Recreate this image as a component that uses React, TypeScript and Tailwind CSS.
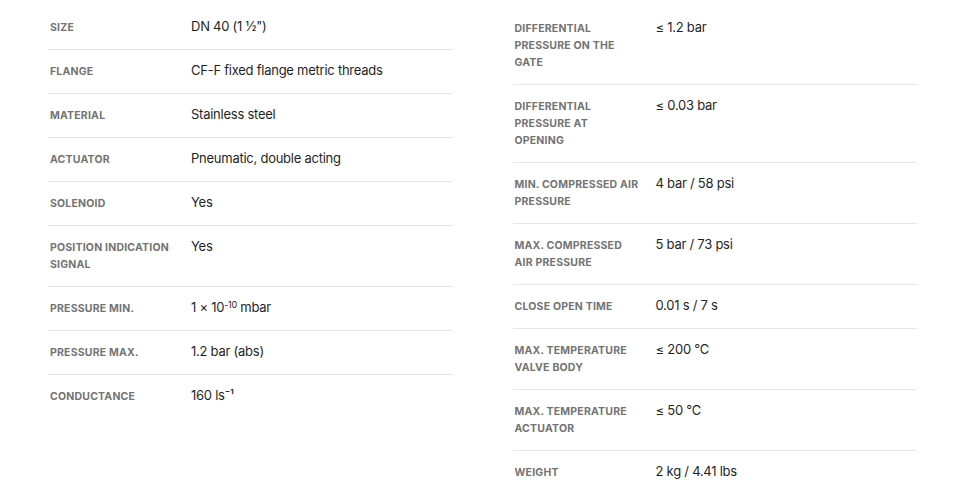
import React from "react";

type Spec = { label: string[]; value: React.ReactNode };

const left: Spec[] = [
  { label: ["Size"], value: "DN 40 (1 ½\")" },
  { label: ["Flange"], value: "CF-F fixed flange metric threads" },
  { label: ["Material"], value: "Stainless steel" },
  { label: ["Actuator"], value: "Pneumatic, double acting" },
  { label: ["Solenoid"], value: "Yes" },
  { label: ["Position indication", "signal"], value: "Yes" },
  {
    label: ["Pressure min."],
    value: (
      <>
        1 × 10<sup className="text-[9px]">-10</sup> mbar
      </>
    ),
  },
  { label: ["Pressure max."], value: "1.2 bar (abs)" },
  { label: ["Conductance"], value: "160 ls⁻¹" },
];

const right: Spec[] = [
  { label: ["Differential", "pressure on the", "gate"], value: "≤ 1.2 bar" },
  { label: ["Differential", "pressure at", "opening"], value: "≤ 0.03 bar" },
  { label: ["Min. compressed air", "pressure"], value: "4 bar / 58 psi" },
  { label: ["Max. compressed", "air pressure"], value: "5 bar / 73 psi" },
  { label: ["Close open time"], value: "0.01 s / 7 s" },
  { label: ["Max. temperature", "valve body"], value: "≤ 200 °C" },
  { label: ["Max. temperature", "actuator"], value: "≤ 50 °C" },
  { label: ["Weight"], value: "2 kg / 4.41 lbs" },
];

const SpecTable = ({ rows, className = "" }: { rows: Spec[]; className?: string }) => (
  <div className={`flex flex-col ${className}`}>
    {rows.map((row, i) => (
      <div
        key={row.label.join(" ")}
        className={`flex py-[13px] ${i < rows.length - 1 ? "border-b border-[#e6e6e6]" : ""}`}
      >
        <div className="w-[143px] shrink-0 pl-[2px] text-[10.5px] leading-[17px] font-bold uppercase tracking-[0.2px] text-[#737373]">
          {row.label.map((line) => (
            <span key={line} className="block whitespace-nowrap">
              {line}
            </span>
          ))}
        </div>
        <div className="-mt-[2px] text-[13px] leading-[18px] tracking-[-0.25px] text-[#1f1f1f]">
          {row.value}
        </div>
      </div>
    ))}
  </div>
);

export default function App() {
  return (
    <div className="min-h-screen bg-white font-['Inter',sans-serif]">
      <div className="ml-[48px] w-[869px] pt-[6px] grid grid-cols-2 gap-x-[60px] items-start">
        <SpecTable rows={left} />
        <SpecTable rows={right} className="pt-px" />
      </div>
    </div>
  );
}
